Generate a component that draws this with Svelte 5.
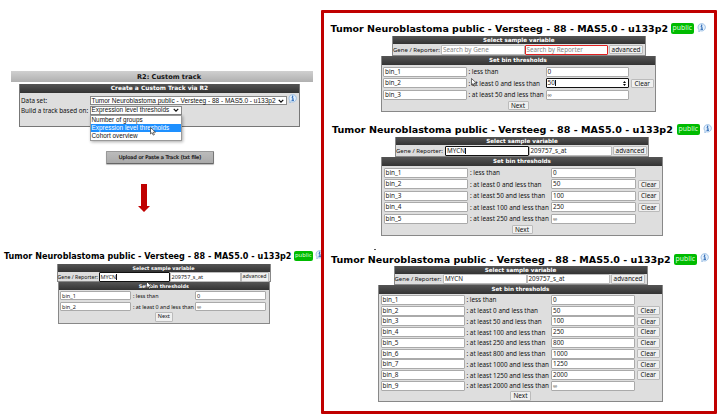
<script>
  const dataset = 'Tumor Neuroblastoma public - Versteeg - 88 - MAS5.0 - u133p2';

  const bins = (limits) =>
    limits.map((limit, i) => ({
      name: `bin_${i + 1}`,
      label: i === 0 ? ': less than' : `: at least ${limits[i - 1]} and less than`,
      value: limit,
      clear: i > 0 && i < limits.length - 1
    }));

  const start = { id: 'start', gene: 'MYCN', reporter: '209757_s_at', caret: 'gene', rows: bins(['0', '∞']) };
  const steps = [
    { id: 'one', gene: '', reporter: '', caret: 'bin', rows: bins(['0', '50', '∞']) },
    { id: 'two', gene: 'MYCN', reporter: '209757_s_at', caret: 'gene', rows: bins(['0', '50', '100', '250', '∞']) },
    { id: 'three', gene: 'MYCN', reporter: '209757_s_at', caret: '', rows: bins(['0', '50', '100', '250', '800', '1000', '1250', '2000', '∞']) }
  ];
  const options = ['Number of groups', 'Expression level thresholds', 'Cohort overview'];
</script>

{#snippet info()}
  <svg class="info" viewBox="0 0 18 18">
    <path d="M9 1.2a7.4 7.4 0 1 1-2 14.4L3.4 17.4l.7-3.6A7.4 7.4 0 0 1 9 1.2z" fill="#e4f0fc" stroke="#8db5df" stroke-width="1.6" />
    <path d="M7.3 7.4h2.6v5M7 12.6h5" fill="none" stroke="#1f5fb0" stroke-width="2" />
    <circle cx="9.3" cy="4.6" r="1.4" fill="#1f5fb0" />
  </svg>
{/snippet}

{#snippet pointer()}
  <svg class="pointer" viewBox="0 0 12 18">
    <path d="M1 1v13l3.2-2.8 2.1 5 2.5-1-2.2-4.8H11z" fill="#fff" stroke="#111" stroke-width="1.2" />
  </svg>
{/snippet}

{#snippet panel(p)}
  <section class="panel {p.id}">
    <h2><span class="name">{dataset}</span><span class="badge">public</span>{@render info()}</h2>
    <div class="vars">
      <h3>Select sample variable</h3>
      <div class="search">
        <span class="lbl">Gene / Reporter:</span>
        <div class="field gene" class:focus={p.caret === 'gene'} class:empty={!p.gene}>{p.gene || 'Search by Gene'}{#if p.caret === 'gene'}<i></i>{/if}</div>
        <div class="field reporter" class:empty={!p.reporter}>{p.reporter || 'Search by Reporter'}</div>
        <div class="btn adv">advanced</div>
      </div>
    </div>
    <div class="bins">
      <h3>Set bin thresholds</h3>
      {#each p.rows as row, i}
        <div class="row">
          <div class="field">{row.name}</div>
          <span class="lbl">{row.label}</span>
          <div class="field" class:inf={row.value === '∞'} class:focus={p.caret === 'bin' && i === 1}>{row.value}{#if p.caret === 'bin' && i === 1}<i></i><svg class="spin" viewBox="0 0 6 10"><path d="M0 4l3-4 3 4zM0 6l3 4 3-4z" /></svg>{/if}</div>
          {#if row.clear}<div class="btn">Clear</div>{/if}
        </div>
      {/each}
      <div class="foot"><div class="btn next">Next</div></div>
    </div>
    {#if p.id === 'one' || p.id === 'start'}{@render pointer()}{/if}
  </section>
{/snippet}

<main>
  <div class="left">
    <div class="bar">R2: Custom track</div>
    <div class="create">
      <h3>Create a Custom Track via R2</h3>
      <div class="line">
        <span class="lbl">Data set:</span>
        <div class="select wide"><span>{dataset}</span><svg viewBox="0 0 8 5"><path d="M1 1l3 3 3-3" /></svg></div>
        {@render info()}
      </div>
      <div class="line second">
        <span class="lbl">Build a track based on:</span>
        <div class="select"><span>{options[1]}</span><svg viewBox="0 0 8 5"><path d="M1 1l3 3 3-3" /></svg>
          <div class="menu">
            {#each options as option, i}
              <div class:on={i === 1}><span>{option}</span></div>
            {/each}
            {@render pointer()}
          </div>
        </div>
      </div>
    </div>
    <div class="or">OR</div>
    <div class="upload">Upload or Paste a Track (txt file)</div>
    <svg class="arrow" viewBox="0 0 12 28"><path d="M3 0h6v22h3l-6 6-6-6h3z" fill="#c00000" /></svg>
    {@render panel(start)}
  </div>
  <div class="right">
    {#each steps as step}
      {@render panel(step)}
    {/each}
    <b class="speck"></b>
  </div>
</main>

<style>
  :global(body) { background: #fff; overflow: hidden; }
  main { display: flex; width: 720px; height: 416px; font-family: 'Noto Sans', sans-serif; color: #111; white-space: nowrap; }
  main :global(*) { box-sizing: border-box; }
  h2, h3 { margin: 0; }
  .left { width: 321px; height: 416px; overflow: hidden; flex: none; }
  .right { position: relative; width: 396px; height: 404px; margin-top: 10px; border: 3px solid #c00000; border-radius: 1px; flex: none; }

  h3 { height: 8px; background: linear-gradient(#555, #333); color: #fff; text-align: center; font: bold 5.6px/8.5px 'DejaVu Sans', sans-serif; }
  .lbl { font-size: 6px; flex: none; }
  .info { width: 9px; height: 9px; flex: none; display: block; }
  .pointer { position: absolute; width: 6px; height: 9px; }

  .bar { margin: 71px 0 0 11px; width: 302px; height: 11px; background: linear-gradient(#d0d0d0, #b0b0b0); text-align: center; padding-left: 14px; font: bold 6.6px/12px 'DejaVu Sans', sans-serif; color: #111; }
  .create { margin: 2px 0 0 19px; width: 281px; height: 43px; background: #dedede; border: 1px solid #777; border-width: 0 1px 1px; }
  .create h3 { height: 9px; line-height: 9.5px; font-size: 5.9px; }
  .line { display: flex; height: 9px; margin-top: 3px; align-items: center; }
  .line.second { height: 10px; margin-top: 0; }
  .line .lbl { width: 69.5px; padding-left: 1px; font-size: 6.3px; }
  .line .info { margin: -4px 0 0 1px; }
  .select { position: relative; display: flex; align-items: center; justify-content: space-between; width: 92px; height: 9px; background: #fff; border: 1px solid #888; padding: 0 2px 0 1px; font: 6.4px/8px 'Liberation Sans', sans-serif; }
  .select.wide { width: 197px; font-size: 6.5px; }
  .select > svg { width: 6px; height: 4px; flex: none; fill: none; stroke: #111; stroke-width: 1.7; }
  .menu { position: absolute; left: -1px; top: 8px; width: 92px; height: 26px; border: 1px solid #999; background: #fff; box-shadow: 1px 1px 3px #0005; z-index: 2; }
  .menu div { height: 8px; padding-left: 1px; line-height: 8px; }
  .menu .on { background: #1e90ff; color: #fff; }
  .menu .pointer { left: 59px; top: 11px; }
  .or { width: 30px; margin: 7px 0 0 145px; height: 8px; text-align: center; font-size: 6px; line-height: 8px; }
  .upload { margin: 9px 0 0 106px; width: 108px; height: 13px; background: linear-gradient(#bbb, #aaa); border: 1px solid #999; border-right-color: #777; border-bottom-color: #666; border-radius: 1px; box-shadow: 0 1px 1px #0004; text-align: center; font: 5.15px/11px 'DejaVu Sans', sans-serif; color: #000; -webkit-text-stroke: .15px #000; }
  .arrow { display: block; width: 12px; height: 28px; margin: 20px 0 0 138px; }

  .panel { position: relative; }
  h2 { display: flex; align-items: center; height: 11px; font: bold 9.49px/11px 'DejaVu Sans', sans-serif; color: #000; }
  .name { width: var(--name); flex: none; }
  .badge { width: 22.5px; height: 11px; flex: none; border-radius: 2px; background: #0b0; color: #dfffdf; font: 6.8px/10px 'Noto Sans', sans-serif; text-align: center; }
  h2 .info { margin: -3px 0 0 3.5px; }
  .vars { margin: var(--gap, 2px) 0 0 var(--vx); width: var(--vw); height: var(--vh, 20px); background: #ddd; border: 1px solid #888; border-width: 0 1px 1px; }
  .search { display: flex; height: 10px; margin-top: .5px; align-items: center; }
  .search .lbl { width: var(--sl, 48px); }
  .field { position: relative; flex: none; width: var(--fw, 83.5px); height: var(--fh, 10px); border: 1px solid #aaa; border-radius: 1px; background: #fff; font: var(--ff, 6.4px)/8px 'Noto Sans', sans-serif; padding-left: 1px; color: #222; display: flex; align-items: center; }
  .gene, .reporter { border-color: #bbb; font-size: var(--ff, 6.3px); }
  .search .btn { width: var(--aw, 34px); margin-left: 1px; }
  .focus { border-color: #111; }
  .field i { width: .7px; height: 6px; background: #111; }
  .empty { color: #888; }
  .reporter.empty { border: 1px solid #e02020; }
  .inf { font-size: 5.8px; color: #333; }
  .spin { position: absolute; right: 2px; top: 1.5px; width: 3px; height: 5px; }
  .btn { height: 9.5px; border: 1px solid #bbb; border-radius: 1px; background: #f0f0f0; font-size: var(--ff, 6.4px); line-height: 7.5px; text-align: center; width: 22.5px; }
  .bins { margin-left: var(--bx); width: var(--bw); height: var(--bh); background: #dedede; border: 1px solid #888; border-width: 0 1px 1px; }
  .bins h3 { height: 9px; line-height: 9.5px; margin-bottom: var(--hb, 1px); }
  .row { display: flex; height: var(--pitch); align-items: center; padding-left: 1.5px; }
  .row .lbl { width: var(--lw); padding-left: 2px; font-size: 6.35px; }
  .row .btn { margin-left: 2px; }
  .foot { display: flex; justify-content: center; }
  .next { width: 21px; }

  .start { margin: 38.5px 0 0 4px; --name: 290px; --vx: 52.5px; --vw: 214px; --vh: 18.5px; --gap: 2px; --sl: 41px; --fw: 71px; --fh: 9.5px; --ff: 5.5px; --aw: 28px; --bx: 53.5px; --bw: 212.5px; --bh: 41.5px; --pitch: 11px; --lw: 64px; --hb: 0px; }
  .start h2 { font-size: 8.08px; }
  .start .badge { width: 18.5px; height: 10px; font-size: 5.8px; line-height: 9px; }
  .start h2 .info { margin-left: 2.5px; }
  .start .lbl { font-size: 5.2px; }
  .start .row .lbl { font-size: 5.4px; }
  .start h3 { font-size: 4.85px; height: 8px; line-height: 8px; }
  .start .vars .btn { margin-left: 0; font-size: 5.3px; }
  .start .next { width: 18px; }
  .start .pointer { left: 142px; top: 30px; }
  .one { margin: 10px 0 0 6.5px; --name: 340.5px; --vx: 61.5px; --vw: 253.5px; --bx: 50px; --bw: 275px; --bh: 55.5px; --pitch: 11.5px; --lw: 79px; }
  .one .pointer { left: 140px; top: 55px; }
  .two { margin: 12.5px 0 0 8px; --name: 345px; --vx: 63px; --vw: 254px; --bx: 49px; --bw: 282px; --bh: 79px; --pitch: 11.5px; --lw: 83px; --fw: 84.5px; }
  .two h2 { font-size: 9.58px; }
  .two .vars { --fw: 83.5px; --sl: 49px; }
  .three { margin: 17.5px 0 0 7px; --name: 343px; --vx: 62.5px; --vw: 254px; --vh: 19px; --bx: 47px; --bw: 285px; --bh: 117px; --pitch: 10.75px; --lw: 86.5px; --fw: 84px; --gap: 1px; }
  .three h2 { font-size: 9.56px; }
  .three .vars { --fw: 83.5px; --sl: 48.5px; }
  .speck { position: absolute; left: 50px; top: 235.5px; width: 2px; height: 1px; background: #555; }
</style>
